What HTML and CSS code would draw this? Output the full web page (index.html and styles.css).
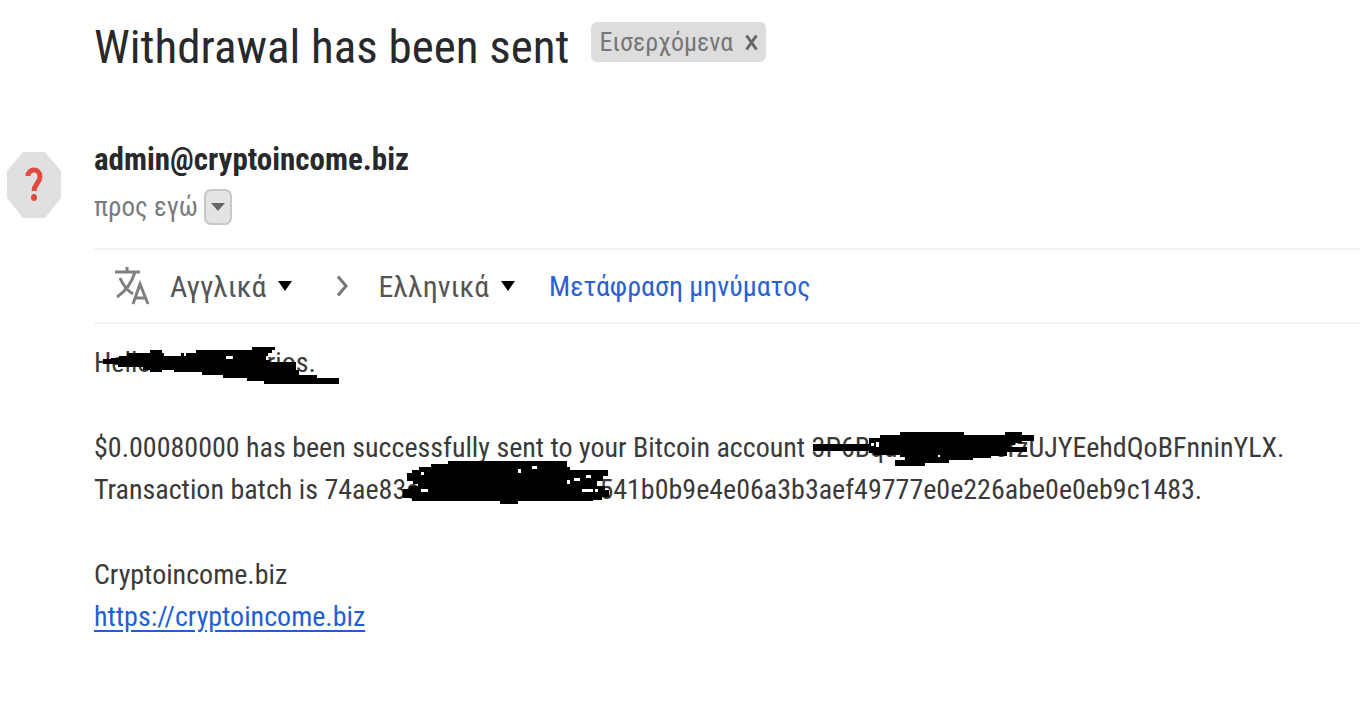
FILE: index.html
```html
<!DOCTYPE html>
<html lang="el">
<head>
<meta charset="utf-8">
<meta name="viewport" content="width=device-width, initial-scale=1">
<title>Withdrawal has been sent</title>
<link rel="stylesheet" href="styles.css">
</head>
<body>
<main class="mail">
  <header class="subject">
    <h1 class="subject-title">Withdrawal has been sent</h1>
    <span class="label">Εισερχόμενα
      <button class="label-remove" type="button" aria-label="Κατάργηση ετικέτας">
        <svg width="13" height="17" viewBox="0 0 13 17"><path d="M1.500 1.500 11.500 15.500M11.500 1.500 1.500 15.500"/></svg>
      </button>
    </span>
  </header>
  <div class="message">
    <svg class="avatar" width="54" height="66" viewBox="0 0 54 66" aria-hidden="true">
      <path class="avatar-shape" d="M16 0H38L54 19V46L38 66H16L0 46V19Z"/>
      <path class="avatar-mark" d="M21 24C21 16 33 16 33 24.500C33 31 27 32 27 39"/>
      <ellipse class="avatar-dot" cx="27" cy="45.500" rx="3" ry="3.500"/>
    </svg>
    <div class="content">
      <div class="sender">admin@cryptoincome.biz</div>
      <div class="recipient">
        <span>προς εγώ</span>
        <button class="details" type="button" aria-label="Εμφάνιση λεπτομερειών">
          <svg width="14" height="8" viewBox="0 0 14 8"><path d="M0 0H14L7 8Z"/></svg>
        </button>
      </div>
      <div class="translate">
        <svg class="translate-icon" width="36" height="40" viewBox="0 0 36 40" aria-hidden="true">
          <path d="M1 6H26M13 1V6M21 6C18 16 12 25 3 31M6 12C9 19 14 25 19 28"/>
          <path d="M19 38 26 18 34 38M21.500 32H31.500"/>
        </svg>
        <button class="language" type="button">Αγγλικά
          <svg width="14" height="10" viewBox="0 0 14 10"><path d="M0 0H14L7 10Z"/></svg>
        </button>
        <svg class="chevron" width="12" height="22" viewBox="0 0 12 22" aria-hidden="true"><path d="M2 1.500 10 11 2 20.500"/></svg>
        <button class="language" type="button">Ελληνικά
          <svg width="14" height="10" viewBox="0 0 14 10"><path d="M0 0H14L7 10Z"/></svg>
        </button>
        <button class="translate-action" type="button">Μετάφραση μηνύματος</button>
      </div>
      <div class="body">
        <p><span class="redacted name"><span>Hello</span><span>rios.</span>
          <svg class="scribble" width="246" height="44" viewBox="0 0 246 44" aria-hidden="true">
            <path d="M9 17H17V16H25V14H33V11H56V8H68V11H70V14H87V11H90V14H92V11H102V8H158V5H181V8H178V11H174V14H172V18H176V20H202V28H205V33H223V36H245V42H170V39H153V36H129V33H108V30H80V28H68V30H56V28H49V25H24V22H9Z"/>
            <path class="gap" d="M132 14H139V17H132Z"/>
          </svg></span></p>
        <p>$0.00080000 has been successfully sent to your Bitcoin account <span class="redacted account"><span>3P6Bqu</span><span>5rz</span>
          <svg class="scribble" width="224" height="42" viewBox="0 0 224 42" aria-hidden="true">
            <path d="M1 17H57V11H68V8H88V5H152V8H193V5H210V8H222V14H210V16H203V18H198V20H215V25H195V29H179V31H161V33H137V36H113V39H83V33H93V30H88V28H62V26H57V24H1Z"/>
            <path class="gap" d="M59 16H62V19H59ZM64 15H67V20H64ZM126 28H128V30H126Z"/>
          </svg></span>UJYEehdQoBFnninYLX.<br>
        Transaction batch is 74ae83<span class="redacted batch"><span>c</span><span>5</span>
          <svg class="scribble" width="206" height="44" viewBox="3 8 206 44" aria-hidden="true">
            <path d="M4 12H9V9H16V6H28V3H45V0H164V6H167V9H205V15H200V20H194V25H202V29H206V36H199V39H190V40H115V43H97V40H9V37H0V28H6V25H15V23H10V20H4Z"/>
            <path class="gap" d="M18 11H21V14H18ZM18 28H25V31H18ZM115 8H118V12H115ZM129 5H134V8H129ZM164 19H167V23H164ZM171 17H177V20H171ZM183 14H188V17H183ZM179 28H190V31H179ZM192 28H195V31H192Z"/>
          </svg></span>41b0b9e4e06a3b3aef49777e0e226abe0e0eb9c1483.</p>
        <p>Cryptoincome.biz<br><a href="https://cryptoincome.biz">https://cryptoincome.biz</a></p>
      </div>
    </div>
  </div>
</main>
</body>
</html>
```
FILE: styles.css
```css
* { box-sizing: border-box; }
body { margin: 0; background: #fff; color: #333; font-family: "Roboto Condensed", Roboto, "Noto Sans", sans-serif; }
button { margin: 0; padding: 0; border: 0; background: none; color: inherit; font: inherit; }
.mail { padding: 20px 0 32px 7px; }
.subject { display: flex; align-items: flex-start; gap: 22px; padding-left: 87px; }
.subject-title { margin: 0; color: #27292c; font-size: 47px; font-weight: 400; line-height: 54px; white-space: nowrap; }
.label { display: flex; align-items: center; gap: 12px; height: 40px; margin-top: 2px; padding: 0 8px; border-radius: 6px; background: #ddd; color: #777; font-size: 26px; white-space: nowrap; }
.label-remove { display: flex; }
.label-remove svg { fill: none; stroke: #666; stroke-width: 3; }
.message { display: flex; gap: 33px; padding-top: 66px; }
.avatar { flex: none; margin-top: 12px; }
.avatar-shape { fill: #e0e0e0; }
.avatar-mark { fill: none; stroke: #e34b3c; stroke-width: 5; }
.avatar-dot { fill: #e34b3c; }
.content { flex: 1; min-width: 0; }
.sender { color: #27292c; font-size: 31px; font-weight: 700; line-height: 40px; }
.recipient { display: flex; align-items: center; gap: 6px; height: 36px; margin-top: 9px; color: #777b80; font-size: 27px; }
.details { display: flex; align-items: center; justify-content: center; width: 28px; height: 36px; border: 2px solid #c5c8cc; border-radius: 7px; background: #e3e3e3; }
.details svg { fill: #666; }
.translate { display: flex; align-items: center; height: 76px; margin-top: 23px; padding-left: 20px; border-top: 2px solid #f1f3f4; border-bottom: 2px solid #f1f3f4; color: #555; font-size: 30px; white-space: nowrap; }
.translate-icon { margin-right: 20px; fill: none; stroke: #808080; stroke-width: 3; }
.language { display: flex; align-items: center; gap: 12px; }
.language svg { fill: #000; }
.chevron { margin: 0 30px 0 44px; fill: none; stroke: #777; stroke-width: 3; }
.translate-action { margin-left: 34px; color: #2962d0; font-size: 28px; }
.body { padding-top: 18px; color: #3a3a3a; font-size: 28px; line-height: 42px; white-space: nowrap; }
.body p { margin: 0 0 43px; }
.body a { color: #1f5fd6; text-underline-offset: 4px; }
.redacted { position: relative; display: inline-flex; justify-content: space-between; }
.name { width: 222px; }
.account { width: 217px; }
.batch { width: 207px; }
.scribble { position: absolute; left: 0; top: 0; overflow: visible; fill: #000; }
.gap { fill: #fff; }
```
